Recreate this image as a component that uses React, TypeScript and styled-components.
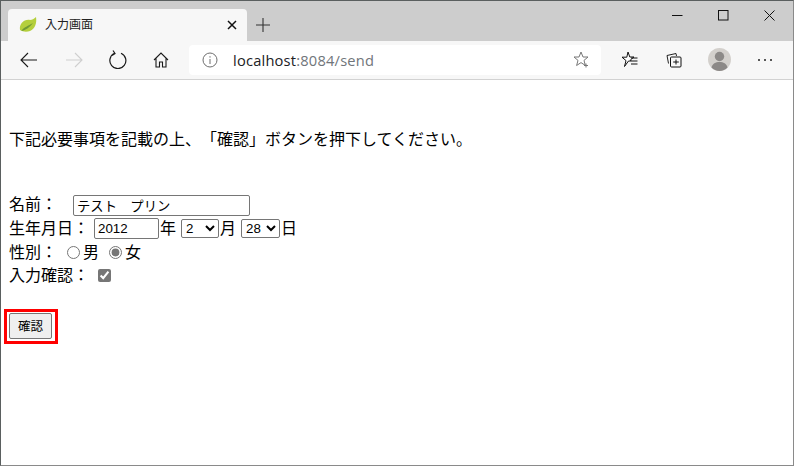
import React from "react";
import styled, { createGlobalStyle } from "styled-components";

const Global = createGlobalStyle`
  html, body { margin: 0; padding: 0; background: #fff; overflow: hidden; }
  * { box-sizing: border-box; }
`;

const Win = styled.div`
  width: 794px; height: 466px; display: flex; flex-direction: column;
  border: 1px solid #5a5f5f; border-bottom-color: #8a8a8a; border-right-color: #8a8a8a;
  font-family: "Liberation Sans", "Noto Sans CJK JP", sans-serif; background: #fff;
  overflow: hidden;
`;
const TabStrip = styled.div`
  height: 40px; background: #cdcdcd; display: flex; align-items: flex-end; padding-left: 7px; flex: none;
`;
const Tab = styled.div`
  width: 239px; height: 32px; background: #f7f7f7; border-radius: 4px 4px 0 0;
  display: flex; align-items: center; padding: 0 0 0 11px; flex: none;
`;
const TabTitle = styled.span`
  font-size: 12px; color: #222; margin-left: 8px; flex: 1; letter-spacing: 0; line-height: 14px;
`;
const TabClose = styled.svg`margin-right: 10px;`;
const NewTab = styled.svg`margin: 0 0 9px 9px;`;
const Spacer = styled.div`flex: 1;`;
const WinBtns = styled.div`display: flex; align-self: stretch; align-items: flex-start; padding-right: 1px;`;
const WinBtn = styled.div`
  width: 46px; height: 29px; display: flex; align-items: center; justify-content: center;
`;
const Toolbar = styled.div`
  height: 39px; background: #f7f7f7; border-bottom: 1px solid #d2d2d2; display: flex; align-items: center; flex: none;
  padding: 0 0 1px 6px;
`;
const ToolBtn = styled.div<{ $w: number }>`
  width: ${p => p.$w}px; height: 30px; display: flex; align-items: center; justify-content: center; flex: none;
`;
const Address = styled.div`
  width: 412px; height: 30px; background: #fff; border-radius: 4px; margin: 0 6px; display: flex; align-items: center;
  padding: 0 11px 0 13px; flex: none;
`;
const Url = styled.div`
  flex: 1; margin-left: 15px; font-size: 14.67px; color: #70757a; font-family: "Open Sans", "Liberation Sans", sans-serif; letter-spacing: 0.2px;
`;
const Host = styled.span`color: #202124;`;
const Page = styled.main`
  flex: 1; padding: 49px 0 0 8px; font-size: 16px; line-height: 21px; color: #000; position: relative;
  font-family: "Liberation Serif", "Noto Sans CJK JP", sans-serif;
  text-spacing-trim: space-all;
`;
const Lead = styled.p`margin: 0 0 43px; height: 21px;`;
const Row = styled.div`
  height: 23.67px; display: flex; align-items: center; white-space: pre;
`;
const Label = styled.span<{ $w?: number }>`
  ${p => (p.$w ? `width: ${p.$w}px;` : "")} flex: none;
`;
const NameInput = styled.input`
  width: 177px; height: 21px; margin-top: 2px; border: 1px solid #767676; border-radius: 2px; font: 13.33px "Noto Sans CJK JP", sans-serif;
  padding: 1px 3px; color: #000; background: #fff; outline: none;
`;
const YearInput = styled.input`
  width: 65px; height: 21px; border: 1px solid #767676; border-radius: 2px; font: 13.33px "Liberation Sans", sans-serif;
  padding: 1px 3px; margin-right: 1px; color: #000; background: #fff;
`;
const Sel = styled.select<{ $w: number }>`
  width: ${p => p.$w}px; height: 19px; border: 1px solid #767676; border-radius: 2px; background: #fff; color: #000;
  font: 13.33px "Liberation Sans", sans-serif; margin: 0 1px 0 5px; padding: 0;
`;
const Radio = styled.input`
  width: 13px; height: 13px; margin: 0 3px 0 10px; accent-color: #767676;
`;
const Check = styled.input`
  width: 13px; height: 13px; margin: 0 0 0 9px; accent-color: #767676;
`;
const ConfirmWrap = styled.div`
  margin-top: 25px; position: relative; height: 26px; width: fit-content;
`;
const Marker = styled.div`
  position: absolute; left: -5px; top: -4px; width: 54px; height: 35px; border: 3px solid #f00; pointer-events: none;
`;
const Confirm = styled.button`
  width: 43px; height: 26px; font: 12.5px "Noto Sans CJK JP", sans-serif; color: #000; background: #efefef;
  border: 1px solid #767676; border-radius: 2px; padding: 0; display: block;
`;

const stroke = { fill: "none", stroke: "#1a1a1a", strokeWidth: 1.1 } as const;

export default function App() {
  return (
    <Win>
      <Global />
      <TabStrip>
        <Tab>
          <svg width="18" height="16" viewBox="0 0 18 16">
            <path d="M1 13C0 7 5 2 11 3c2 0 4-1 6-3 1 6-1 12-6 14-3 1-7 1-10-1z" fill="#b4cf3c" />
            <path d="M2 14c3-4 7-5 12-8-3 4-7 7-12 8z" fill="#6f9a33" />
          </svg>
          <TabTitle>入力画面</TabTitle>
          <TabClose width="10" height="10" viewBox="0 0 10 10">
            <path d="M1 1l8 8M9 1L1 9" stroke="#111" strokeWidth="1.5" fill="none" />
          </TabClose>
        </Tab>
        <NewTab width="14" height="14" viewBox="0 0 14 14">
          <path d="M7 0v14M0 7h14" stroke="#333" strokeWidth="1.1" fill="none" />
        </NewTab>
        <Spacer />
        <WinBtns>
          <WinBtn>
            <svg width="11" height="11" viewBox="0 0 11 11"><path d="M0 5.5h10.5" stroke="#111" strokeWidth="1" /></svg>
          </WinBtn>
          <WinBtn>
            <svg width="11" height="11" viewBox="0 0 11 11"><rect x=".5" y=".5" width="9.5" height="9.5" fill="none" stroke="#111" /></svg>
          </WinBtn>
          <WinBtn>
            <svg width="11" height="11" viewBox="0 0 11 11"><path d="M.5.5l10 10M10.5.5l-10 10" stroke="#111" fill="none" /></svg>
          </WinBtn>
        </WinBtns>
      </TabStrip>
      <Toolbar>
        <ToolBtn $w={44}>
          <svg width="18" height="16" viewBox="0 0 18 16"><path d="M17 8H1M8 1L1 8l7 7" {...stroke} /></svg>
        </ToolBtn>
        <ToolBtn $w={45}>
          <svg width="18" height="16" viewBox="0 0 18 16"><path d="M1 8h16M10 1l7 7-7 7" {...stroke} stroke="#cfcfcf" /></svg>
        </ToolBtn>
        <ToolBtn $w={43}>
          <svg width="18" height="19" viewBox="0 0 18 19"><path d="M5.500 3.300A8 8 0 1 0 12 3.200M4 .5l2 3-3 2" {...stroke} strokeWidth={1.2} /></svg>
        </ToolBtn>
        <ToolBtn $w={44}>
          <svg width="16" height="16" viewBox="0 0 16 16"><path d="M1 8l7-7 7 7M3 6.500V15h3.500v-5h3v5H13V6.500" {...stroke} /></svg>
        </ToolBtn>
        <Address>
          <svg width="16" height="16" viewBox="0 0 16 16">
            <circle cx="8" cy="8" r="7" fill="none" stroke="#6f6f6f" />
            <path d="M8 7v5M8 4.200v1.400" stroke="#6f6f6f" fill="none" />
          </svg>
          <Url><Host>localhost</Host>:8084/send</Url>
          <svg width="17" height="17" viewBox="0 0 17 17">
            <path d="M8 1l2 5h5l-4 3.400 1.300 5L8 11.600 3.600 14.500 5 9.400 1 6h5z" fill="none" stroke="#777" />
            <path d="M13 12.500v4M11 14.500h4" stroke="#777" fill="none" />
          </svg>
        </Address>
        <ToolBtn $w={44}>
          <svg width="17" height="17" viewBox="0 0 17 17">
            <path d="M7 1l1.800 5H13L9.500 8.800 10 10H7.500L3.500 15.500 5 9.600 1 6.200h4.800z" fill="#fff" stroke="#111" />
            <path d="M10 7h6.500M10 10h6.500M10 13h6.500" stroke="#111" fill="none" />
          </svg>
        </ToolBtn>
        <ToolBtn $w={46}>
          <svg width="16" height="16" viewBox="0 0 16 16">
            <path d="M2.500 11.500L1 3.500 10 1.500l.5 2.500" fill="none" stroke="#222" />
            <rect x="4.500" y="5" width="10.500" height="10" rx="1" fill="#f7f7f7" stroke="#111" />
            <path d="M10 7.500v5M7.200 10h5.600" stroke="#111" fill="none" />
          </svg>
        </ToolBtn>
        <ToolBtn $w={44}>
          <svg width="23" height="23" viewBox="0 0 23 23">
            <circle cx="11.500" cy="11.500" r="11.500" fill="#d3d0cc" />
            <circle cx="11.500" cy="8.500" r="4.700" fill="#8c8987" />
            <path d="M3.500 19.500c1-4 4-5.500 8-5.500s7 1.500 8 5.500c-2 2-5 3.500-8 3.500s-6-1.500-8-3.500z" fill="#8c8987" />
          </svg>
        </ToolBtn>
        <ToolBtn $w={48}>
          <svg width="16" height="4" viewBox="0 0 16 4">
            <circle cx="2" cy="2" r="1" fill="#222" /><circle cx="8" cy="2" r="1" fill="#222" /><circle cx="14" cy="2" r="1" fill="#222" />
          </svg>
        </ToolBtn>
      </Toolbar>
      <Page>
        <Lead>下記必要事項を記載の上、「確認」ボタンを押下してください。</Lead>
        <Row>
          <Label $w={64}>名前：</Label>
          <NameInput defaultValue="テスト　プリン" />
        </Row>
        <Row>
          <Label $w={85}>生年月日：</Label>
          <YearInput defaultValue="2012" />
          <span>年</span>
          <Sel $w={38} defaultValue="2"><option value="2">2</option></Sel>
          <span>月</span>
          <Sel $w={39} defaultValue="28"><option value="28">28</option></Sel>
          <span>日</span>
        </Row>
        <Row>
          <Label>性別：</Label>
          <Radio type="radio" name="g" />
          <span>男</span>
          <Radio type="radio" name="g" defaultChecked />
          <span>女</span>
        </Row>
        <Row>
          <Label>入力確認：</Label>
          <Check type="checkbox" defaultChecked />
        </Row>
        <ConfirmWrap>
          <Confirm>確認</Confirm>
          <Marker />
        </ConfirmWrap>
      </Page>
    </Win>
  );
}
